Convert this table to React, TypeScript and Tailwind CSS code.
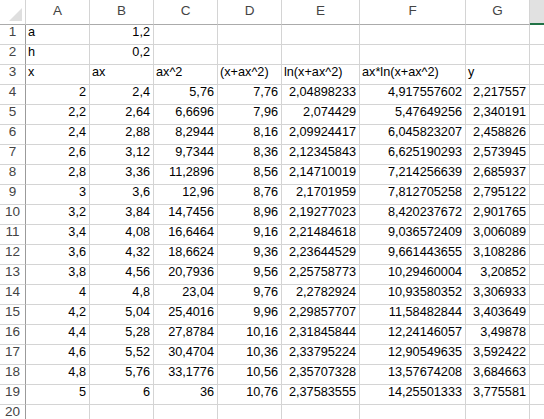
import { Fragment } from 'react';

const cols = ['A', 'B', 'C', 'D', 'E', 'F', 'G'];

// текст ячеек: [A, B, C, D, E, F, G]
const rows: string[][] = [
  ['a', '1,2', '', '', '', '', ''],
  ['h', '0,2', '', '', '', '', ''],
  ['x', 'ax', 'ax^2', '(x+ax^2)', 'ln(x+ax^2)', 'ax*ln(x+ax^2)', 'y'],
  ['2', '2,4', '5,76', '7,76', '2,04898233', '4,917557602', '2,217557'],
  ['2,2', '2,64', '6,6696', '7,96', '2,074429', '5,47649256', '2,340191'],
  ['2,4', '2,88', '8,2944', '8,16', '2,09924417', '6,045823207', '2,458826'],
  ['2,6', '3,12', '9,7344', '8,36', '2,12345843', '6,625190293', '2,573945'],
  ['2,8', '3,36', '11,2896', '8,56', '2,14710019', '7,214256639', '2,685937'],
  ['3', '3,6', '12,96', '8,76', '2,1701959', '7,812705258', '2,795122'],
  ['3,2', '3,84', '14,7456', '8,96', '2,19277023', '8,420237672', '2,901765'],
  ['3,4', '4,08', '16,6464', '9,16', '2,21484618', '9,036572409', '3,006089'],
  ['3,6', '4,32', '18,6624', '9,36', '2,23644529', '9,661443655', '3,108286'],
  ['3,8', '4,56', '20,7936', '9,56', '2,25758773', '10,29460004', '3,20852'],
  ['4', '4,8', '23,04', '9,76', '2,2782924', '10,93580352', '3,306933'],
  ['4,2', '5,04', '25,4016', '9,96', '2,29857707', '11,58482844', '3,403649'],
  ['4,4', '5,28', '27,8784', '10,16', '2,31845844', '12,24146057', '3,49878'],
  ['4,6', '5,52', '30,4704', '10,36', '2,33795224', '12,90549635', '3,592422'],
  ['4,8', '5,76', '33,1776', '10,56', '2,35707328', '13,57674208', '3,684663'],
  ['5', '6', '36', '10,76', '2,37583555', '14,25501333', '3,775581'],
  ['', '', '', '', '', '', ''],
];

const isNum = (s: string) => /^[0-9,]+$/.test(s);

function Corner() {
  return (
    <div className="h-[25px] border-r border-b border-r-[#d4d4d4] border-b-[#ababab] bg-white flex items-end justify-end pr-[3px] pb-[3px]">
      <svg width="13" height="13" viewBox="0 0 13 13">
        <polygon points="13,0 13,13 0,13" fill="#dfdfdf" />
      </svg>
    </div>
  );
}

export default function App() {
  return (
    <div
      className="w-[544px] h-[419px] overflow-hidden bg-white text-[12.7px] text-[#000]"
      style={{ fontFamily: '"Liberation Sans", Arial, sans-serif' }}
    >
      <div className="grid grid-cols-[26px_64px_64px_64px_64px_78px_106px_64px_1fr]">
        {/* шапка столбцов */}
        <Corner />
        {cols.map((c) => (
          <div
            key={c}
            className="h-[25px] border-r border-b border-r-[#d4d4d4] border-b-[#ababab] flex items-center justify-center text-[#444] text-[13.5px] pb-[1px]"
          >
            {c}
          </div>
        ))}
        <div className="h-[25px] bg-[#e1e1e1] border-b-2 border-b-[#217346]" />

        {rows.map((r, i) => (
          <Fragment key={i}>
            <div className="h-[20px] border-r border-b border-r-[#9b9b9b] border-b-[#d4d4d4] flex items-end justify-center pb-[2px] text-[#444] text-[13.5px]">
              {i + 1}
            </div>
            {r.map((v, j) => (
              <div
                key={j}
                className={`h-[20px] border-r border-b border-[#d4d4d4] flex items-end pb-[2px] whitespace-nowrap overflow-visible ${
                  isNum(v) ? 'justify-end pr-[3px]' : 'justify-start pl-[2px]'
                }`}
              >
                {v}
              </div>
            ))}
            <div className="h-[20px] border-b border-[#d4d4d4]" />
          </Fragment>
        ))}
      </div>
    </div>
  );
}
